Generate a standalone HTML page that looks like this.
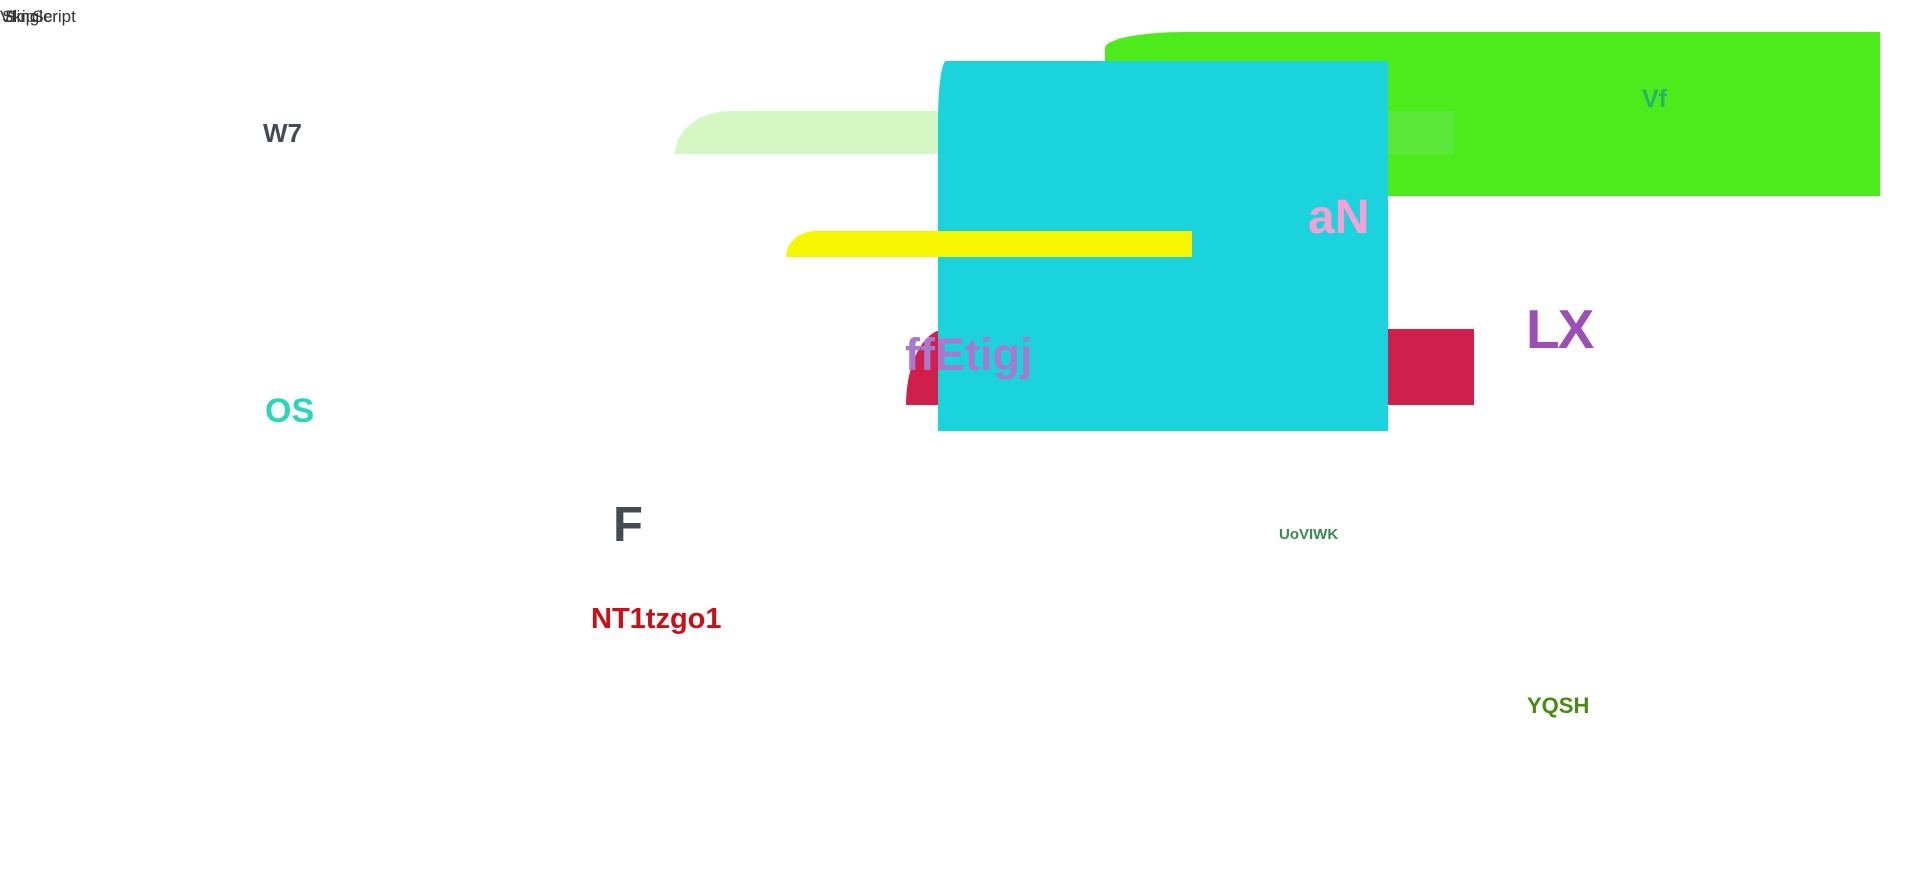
<!DOCTYPE html>
<html><head><meta charset="utf-8"><style>
html,body{margin:0;padding:0;width:1920px;height:870px;overflow:hidden;background:#fff;position:relative;font-family:"Liberation Sans",sans-serif}
.a{position:absolute}
.t{position:absolute;line-height:1;font-weight:bold;white-space:nowrap}
</style></head><body>
<div class="t" style="left:0;top:8px;font-size:17px;font-weight:normal;color:#333">Vf<span style="margin-left:-14px">Skip</span><span style="margin-left:-30px">Single</span><span style="margin-left:-20px">Script</span></div>

<div class="a" style="left:675px;top:111px;width:778px;height:43px;background:#d3f8c3;border-top-left-radius:55px 43px"></div>
<div class="a" style="left:1105px;top:32px;width:775px;height:164px;background:#4deb1c;border-top-left-radius:80px 16px"></div>
<div class="a" style="left:1105px;top:111px;width:349px;height:43px;background:#5ae83a"></div>
<div class="t" style="left:1642px;top:87px;font-size:25px;color:#27b36b">Vf</div>

<div class="a" style="left:906px;top:329px;width:568px;height:76px;background:#d11f4b;border-top-left-radius:40px 76px"></div>
<div class="a" style="left:938px;top:61px;width:450px;height:370px;background:#1bd3dc;border-top-left-radius:8px 60px"></div>
<div class="a" style="left:786px;top:231px;width:406px;height:26px;background:#f6f600;border-top-left-radius:30px 26px"></div>
<div class="t" style="left:1308px;top:194px;font-size:48px;color:#f7a0d6">aN</div>
<div class="t" style="left:905px;top:332px;font-size:45px;color:#a87acd">ffEtigj</div>
<div class="t" style="left:1526px;top:302px;font-size:55px;color:#9b4fb5;letter-spacing:-2px">LX</div>

<div class="t" style="left:263px;top:120px;font-size:26px;color:#454b54">W7</div>
<div class="t" style="left:265px;top:394px;font-size:34px;color:#2ad6b9">OS</div>
<div class="t" style="left:613px;top:501px;font-size:49px;color:#454b54">F</div>
<div class="t" style="left:591px;top:605px;font-size:29px;color:#cc0f17">NT1tzgo1</div>
<div class="t" style="left:1279px;top:527px;font-size:15px;color:#3a8a50">UoVIWK</div>
<div class="t" style="left:1527px;top:695px;font-size:22px;color:#4a8a12">YQSH</div>
</body></html>
